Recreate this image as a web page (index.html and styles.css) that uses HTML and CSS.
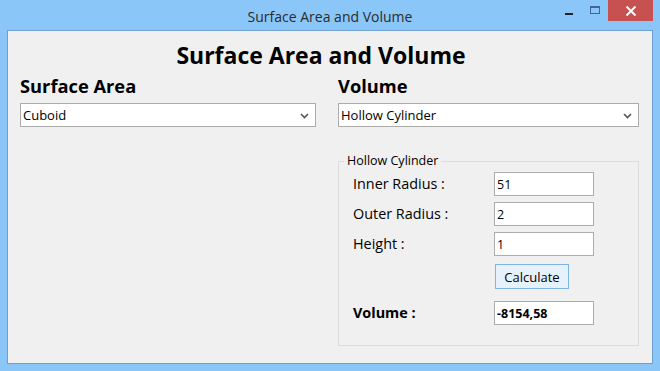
FILE: index.html
```html
<!DOCTYPE html>
<html>
<head>
<meta charset="utf-8">
<link rel="stylesheet" href="styles.css">
</head>
<body>
<div class="window">
  <div class="titlebar">
    <div class="title">Surface Area and Volume</div>
    <div class="controls">
      <div class="ctl min"><span class="dash"></span></div>
      <div class="ctl max"><span class="box"></span></div>
      <div class="ctl close">
        <svg width="12" height="10" viewBox="0 0 12 10"><path d="M1.5 0.5 L10.5 9.5 M10.5 0.5 L1.5 9.5" stroke="#fff" stroke-width="2"/></svg>
      </div>
    </div>
  </div>
  <div class="client">
    <h1 class="heading">Surface Area and Volume</h1>
    <div class="columns">
      <div class="col left">
        <div class="section-label">Surface Area</div>
        <div class="combo"><span>Cuboid</span>
          <svg class="arrow" width="9" height="6" viewBox="0 0 9 6"><path d="M1 1 L4.5 4.5 L8 1" stroke="#555" stroke-width="1.6" fill="none"/></svg>
        </div>
      </div>
      <div class="col right">
        <div class="section-label">Volume</div>
        <div class="combo"><span>Hollow Cylinder</span>
          <svg class="arrow" width="9" height="6" viewBox="0 0 9 6"><path d="M1 1 L4.5 4.5 L8 1" stroke="#555" stroke-width="1.6" fill="none"/></svg>
        </div>
        <fieldset class="group">
          <legend>Hollow Cylinder</legend>
          <div class="form">
            <label class="lbl">Inner Radius :</label>
            <input class="field" type="text" value="51">
            <label class="lbl">Outer Radius :</label>
            <input class="field" type="text" value="2">
            <label class="lbl">Height :</label>
            <input class="field" type="text" value="1">
            <span></span>
            <div class="btnrow"><button class="btn">Calculate</button></div>
            <label class="lbl bold result-lbl">Volume :</label>
            <input class="field bold result" type="text" value="-8154,58">
          </div>
        </fieldset>
      </div>
    </div>
  </div>
</div>
</body>
</html>
```
FILE: styles.css
```css
* { box-sizing: border-box; }
html, body { margin: 0; padding: 0; }
body {
  width: 660px;
  height: 371px;
  overflow: hidden;
  font-family: "Open Sans", "Noto Sans", sans-serif;
}
.window {
  width: 660px;
  height: 371px;
  background: #8ac6f8;
  padding: 0 7px 7px 7px;
  display: flex;
  flex-direction: column;
}
.titlebar {
  height: 30px;
  position: relative;
  display: flex;
  align-items: center;
  justify-content: center;
}
.title {
  font-family: "Open Sans", sans-serif;
  font-size: 14px;
  color: #2b2b2b;
  margin-top: 2px;
}
.controls {
  position: absolute;
  right: 0;
  top: 0;
  display: flex;
  align-items: flex-start;
}
.ctl { display: flex; align-items: center; justify-content: center; }
.min { width: 26px; height: 21px; }
.dash { width: 8px; height: 2px; background: #222; margin-top: 6px; }
.max { width: 26px; height: 21px; }
.box { width: 10px; height: 8px; border: 1px solid #3e6791; border-top-width: 2px; margin-top: -2px; }
.close {
  width: 45px;
  height: 21px;
  background: #c75050;
}
.client {
  flex: 1;
  background: #f0f0f0;
  border: 1px solid #6f9fcf;
  padding: 8px 12px 0 12px;
}
.heading {
  margin: 0;
  font-family: "Open Sans", sans-serif;
  font-weight: 700;
  font-size: 23px;
  line-height: 32px;
  text-align: center;
  padding-right: 18px;
  color: #000;
}
.columns {
  display: flex;
  gap: 22px;
  margin-top: 4px;
}
.col.left { width: 296px; }
.col.right { width: 301px; }
.section-label {
  font-weight: 700;
  font-size: 18.3px;
  line-height: 22px;
  color: #000;
  margin-bottom: 6px;
}
.combo {
  height: 24px;
  background: #fff;
  border: 1px solid #acacac;
  display: flex;
  align-items: center;
  justify-content: space-between;
  padding: 0 6px 0 2px;
  font-size: 13px;
  color: #000;
}
.arrow { margin-top: 1px; }
.group {
  margin: 26px 0 0 0;
  border: 1px solid #dcdcdc;
  padding: 0 0 18px 14px;
  height: 193px;
}
.group legend {
  font-size: 12.5px;
  padding: 0 3px;
  margin-left: -9px;
  line-height: 16px;
  color: #000;
}
.form {
  display: grid;
  grid-template-columns: 141px 100px;
  grid-auto-rows: 24px;
  row-gap: 6px;
  margin-top: 3px;
}
.lbl {
  font-size: 14.4px;
  line-height: 24px;
  color: #000;
}
.field {
  width: 100px;
  height: 24px;
  border: 1px solid #acacac;
  background: #fff;
  font-family: "Open Sans", sans-serif;
  font-size: 12.5px;
  padding: 0 2px;
  color: #000;
  outline: none;
}
.btnrow { padding-top: 2px; padding-left: 1px; }
.btn {
  width: 74px;
  height: 25px;
  background: #e5f1fb;
  border: 1px solid #7eb4ea;
  font-family: "Open Sans", sans-serif;
  font-size: 13px;
  color: #000;
  padding: 0;
}
.bold { font-weight: 700; }
.result-lbl, .result { margin-top: 9px; }
```
